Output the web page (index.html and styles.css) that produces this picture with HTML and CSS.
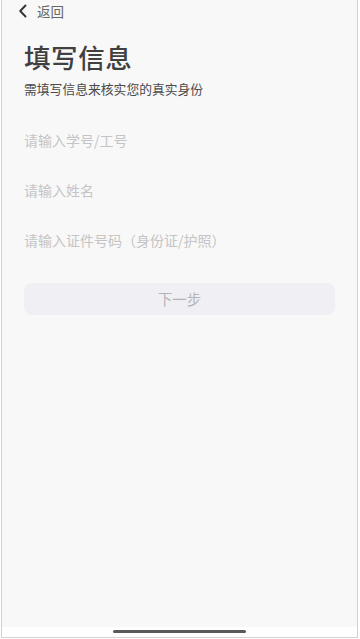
FILE: index.html
```html
<!DOCTYPE html>
<html lang="zh">
<head>
<meta charset="utf-8">
<meta name="viewport" content="width=360">
<link rel="stylesheet" href="styles.css">
</head>
<body>
<div class="screen">
  <main class="main">
    <div class="nav">
      <svg class="back-icon" width="10" height="14" viewBox="0 0 10 14"><path d="M7.5 1.5 L2.2 7 L7.5 12.5" fill="none" stroke="#333" stroke-width="1.9" stroke-linecap="round" stroke-linejoin="round"/></svg>
      <span class="back-text">返回</span>
    </div>
    <h1 class="title">填写信息</h1>
    <p class="subtitle">需填写信息来核实您的真实身份</p>
    <div class="fields">
      <div class="field">请输入学号/工号</div>
      <div class="field">请输入姓名</div>
      <div class="field">请输入证件号码（身份证/护照）</div>
    </div>
    <div class="btn">下一步</div>
  </main>
  <footer class="footer"><div class="indicator"></div></footer>
</div>
</body>
</html>
```
FILE: styles.css
```css
* { box-sizing: border-box; }
html, body { margin: 0; padding: 0; background: #fff; }
body { font-family: "Noto Sans CJK SC", "Noto Sans", sans-serif; }
.screen {
  margin-left: 1px;
  width: 357px;
  height: 638px;
  border-left: 1px solid #d2d2d2;
  border-right: 1px solid #d2d2d2;
  border-bottom: 1px solid #d2d2d2;
  display: flex;
  flex-direction: column;
}
.main {
  flex: 1;
  background: #f8f8f8;
  padding: 0 22px 0 22px;
}
.nav {
  height: 22px;
  display: flex;
  align-items: center;
  margin-left: -6px;
}
.back-icon { display: block; }
.back-text {
  margin-left: 9px;
  font-size: 13.5px;
  color: #666;
  line-height: 22px;
}
.title {
  margin: 20px 0 0 0;
  font-size: 26.5px;
  line-height: 30px;
  font-weight: 500;
  color: #404040;
  letter-spacing: 0.6px;
}
.subtitle {
  margin: 8px 0 0 0;
  font-size: 12.8px;
  line-height: 18px;
  color: #4a4a4a;
}
.fields { margin-top: 17px; }
.field {
  height: 50px;
  line-height: 50px;
  font-size: 14px;
  color: #c4c4c6;
}
.btn {
  margin-top: 18px;
  height: 32px;
  border-radius: 8px;
  background: #efeff4;
  color: #b4b4b8;
  font-size: 14.5px;
  line-height: 32px;
  text-align: center;
}
.footer {
  height: 10px;
  background: #fff;
  display: flex;
  justify-content: center;
  padding-top: 3px;
}
.indicator {
  width: 133px;
  height: 3px;
  border-radius: 2px;
  background: #5a5a5a;
}
```
